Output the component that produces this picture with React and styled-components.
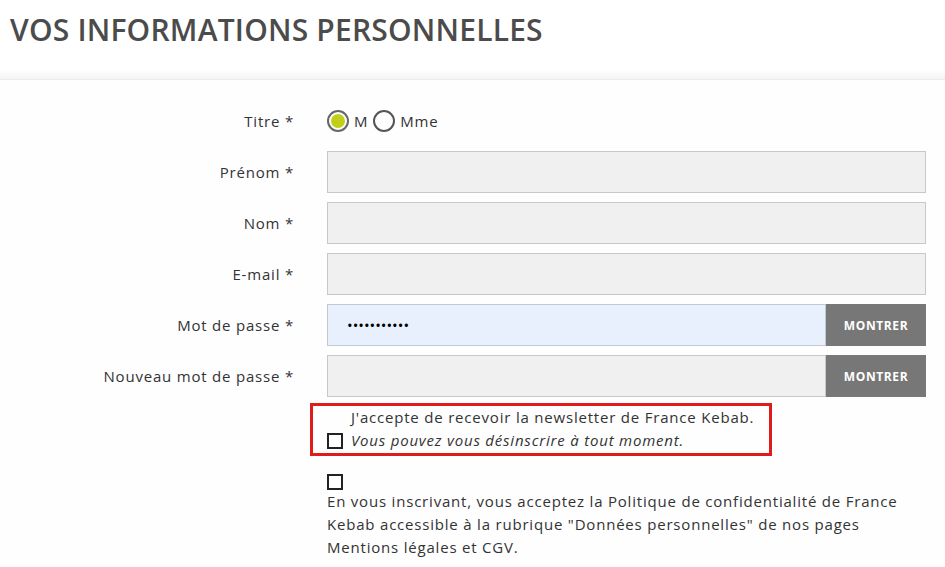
import React, { useState } from 'react'
import styled, { createGlobalStyle } from 'styled-components'

const GlobalStyle = createGlobalStyle`
    body{
        margin:0;
        background-color:#fefefe;
        font-family: "Open Sans", "Liberation Sans", sans-serif;
        color:#333;
    }
`

const Header = styled.div`
    height:80px;
    padding:0 10px;
    box-sizing: border-box;
    background: linear-gradient(to bottom, #ffffff 88%, #f4f4f4 100%);
    border-bottom:1px solid #ececec;
`
const PageTitle = styled.h1`
    margin:0;
    padding-top:9px;
    font-size:30px;
    font-weight:600;
    letter-spacing:0.2px;
    color:#4b4b4b;
`
const Form = styled.form`
    display:grid;
    grid-template-columns: 294px 599px;
    column-gap:33px;
    row-gap:9px;
    padding-top:20px;
    grid-auto-rows:auto;
`
const Label = styled.label`
    height:42px;
    display:flex;
    align-items:center;
    justify-content:flex-end;
    font-size:15px;
    letter-spacing:0.8px;
    color:#333;
`
const FieldRow = styled.div`
    height:42px;
    display:flex;
    align-items:stretch;
`
const RadioGroup = styled.div`
    height:42px;
    display:flex;
    align-items:center;
    font-size:15px;
    letter-spacing:0.8px;
    color:#333;
`
const RadioDot = styled.span`
    width:22px;
    height:22px;
    border-radius:50%;
    border:2px solid ${p => p.checked ? '#666' : '#555'};
    box-sizing:border-box;
    display:flex;
    align-items:center;
    justify-content:center;
    margin:0 5px 0 0;
    &::after{
        content:'';
        width:14px;
        height:14px;
        border-radius:50%;
        background-color:${p => p.checked ? '#bfcf1a' : 'transparent'};
    }
`
const RadioText = styled.span`
    margin-right:5px;
`
const TextInput = styled.input`
    flex-grow:1;
    min-width:0;
    margin:0;
    border:1px solid ${p => p.filled ? '#c3c9d3' : '#c8c8c8'};
    background-color:${p => p.filled ? '#e8f0fe' : '#f0f0f0'};
    padding:0 19px;
    font-size:15px;
    font-family:inherit;
    color:#000;
    box-sizing:border-box;
    outline:none;
`
const ShowButton = styled.button`
    width:100px;
    border:none;
    margin:0;
    background-color:#777777;
    color:#fff;
    font-family:inherit;
    font-size:12px;
    font-weight:700;
    letter-spacing:0.6px;
    cursor:pointer;
`
const Spacer = styled.div``
const NewsletterBox = styled.div`
    margin:-3px 0 0 -17px;
    width:462px;
    border:3px solid #e01b1b;
    box-sizing:border-box;
    padding:0 0 1px 14px;
    display:flex;
    align-items:flex-end;
    gap:8px;
`
const CheckBox = styled.span`
    flex-shrink:0;
    width:16px;
    height:16px;
    border:2px solid #222;
    box-sizing:border-box;
    background-color:#fff;
    margin-bottom:${p => p.bottom || 0}px;
`
const NewsText = styled.div`
    font-size:15px;
    line-height:23px;
    letter-spacing:0.8px;
    color:#333;
`
const Italic = styled.div`
    font-style:italic;
`
const Consent = styled.div`
    margin-top:18px;
    display:flex;
    flex-direction:column;
    align-items:flex-start;
`
const ConsentText = styled.p`
    margin:0;
    font-size:15px;
    line-height:23px;
    letter-spacing:0.8px;
    color:#333;
`

function App() {
    const [titre, setTitre] = useState('M')

    const fields = [
        { label: 'Prénom *' },
        { label: 'Nom *' },
        { label: 'E-mail *' },
    ]

  return (
    <>
    <GlobalStyle />
    <Header>
        <PageTitle>VOS INFORMATIONS PERSONNELLES</PageTitle>
    </Header>
    <Form onSubmit={e => e.preventDefault()}>
        <Label>Titre *</Label>
        <RadioGroup>
            <RadioDot checked={titre === 'M'} onClick={e => setTitre('M')} />
            <RadioText>M</RadioText>
            <RadioDot checked={titre === 'Mme'} onClick={e => setTitre('Mme')} />
            <RadioText>Mme</RadioText>
        </RadioGroup>

        {fields.map((f, i) => (
            <React.Fragment key={i}>
                <Label>{f.label}</Label>
                <FieldRow><TextInput /></FieldRow>
            </React.Fragment>
        ))}

        <Label>Mot de passe *</Label>
        <FieldRow>
            <TextInput type="password" filled defaultValue="azertyuiop1" />
            <ShowButton type="button">MONTRER</ShowButton>
        </FieldRow>

        <Label>Nouveau mot de passe *</Label>
        <FieldRow>
            <TextInput type="password" />
            <ShowButton type="button">MONTRER</ShowButton>
        </FieldRow>

        <Spacer />
        <div>
            <NewsletterBox>
                <CheckBox bottom={3} />
                <NewsText>
                    J'accepte de recevoir la newsletter de France Kebab.
                    <Italic>Vous pouvez vous désinscrire à tout moment.</Italic>
                </NewsText>
            </NewsletterBox>
            <Consent>
                <CheckBox />
                <ConsentText>
                    En vous inscrivant, vous acceptez la Politique de confidentialité de France Kebab accessible à la rubrique "Données personnelles" de nos pages Mentions légales et CGV.
                </ConsentText>
            </Consent>
        </div>
    </Form>
    </>
  )
}

export default App
